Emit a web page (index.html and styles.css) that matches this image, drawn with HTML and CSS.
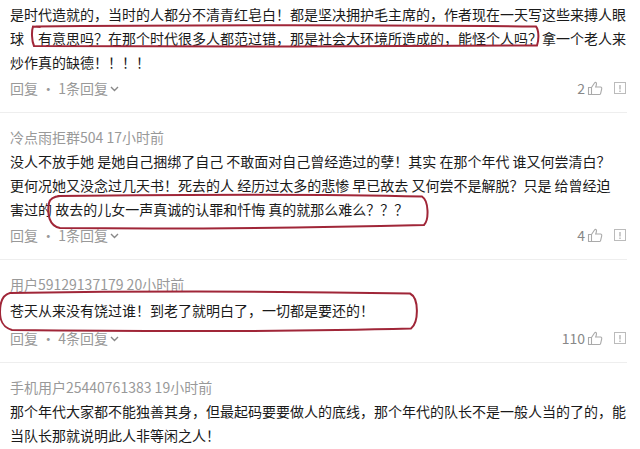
FILE: index.html
```html
<!DOCTYPE html>
<html>
<head>
  <meta charset="utf-8">
  <title>评论</title>
  <link rel="stylesheet" href="styles.css">
</head>
<body>
  <div class="page">
    <div class="comment first">
      <p class="comment-text">是时代造就的，当时的人都分不清青红皂白！都是坚决拥护毛主席的，作者现在一天写这些来搏人眼<br>球　有意思吗？在那个时代很多人都范过错，那是社会大环境所造成的，能怪个人吗？拿一个老人来<br>炒作真的缺德！！！！</p>
      <div class="actions">
        <span class="reply">回复 · 1条回复<svg class="chevron" width="9" height="6" viewBox="0 0 9 6"><path d="M1 1l3.5 3.5L8 1" fill="none" stroke="#888" stroke-width="1.4"/></svg></span>
        <span class="stats">
          <span class="count">2</span>
          <svg class="like" width="16" height="15" viewBox="0 0 16 15"><path d="M1.5 6.5h3v7h-3z M4.5 6.5L7.5 2Q8.5 0.8 9.3 1.8Q9.8 2.6 9.2 4.5L8.7 6H13.5Q15 6.2 14.7 7.8L13.6 12.6Q13.3 13.5 12.4 13.5H4.5" fill="none" stroke="#aaa" stroke-width="1.1"/></svg>
          <svg class="report" width="14" height="14" viewBox="0 0 14 14"><rect x="1.5" y="1.5" width="11" height="11" fill="none" stroke="#bbb"/><path d="M7 4v4.5M7 9.5v1.5" stroke="#aaa" stroke-width="1.2"/></svg>
        </span>
      </div>
    </div>

    <div class="comment">
      <div class="meta">冷点雨拒群504 17小时前</div>
      <p class="comment-text">没人不放手她 是她自己捆绑了自己 不敢面对自己曾经造过的孽！其实 在那个年代 谁又何尝清白？<br>更何况她又没念过几天书！死去的人 经历过太多的悲惨 早已故去 又何尝不是解脱？只是 给曾经迫<br>害过的 故去的儿女一声真诚的认罪和忏悔 真的就那么难么？？？</p>
      <div class="actions">
        <span class="reply">回复 · 1条回复<svg class="chevron" width="9" height="6" viewBox="0 0 9 6"><path d="M1 1l3.5 3.5L8 1" fill="none" stroke="#888" stroke-width="1.4"/></svg></span>
        <span class="stats">
          <span class="count">4</span>
          <svg class="like" width="16" height="15" viewBox="0 0 16 15"><path d="M1.5 6.5h3v7h-3z M4.5 6.5L7.5 2Q8.5 0.8 9.3 1.8Q9.8 2.6 9.2 4.5L8.7 6H13.5Q15 6.2 14.7 7.8L13.6 12.6Q13.3 13.5 12.4 13.5H4.5" fill="none" stroke="#aaa" stroke-width="1.1"/></svg>
          <svg class="report" width="14" height="14" viewBox="0 0 14 14"><rect x="1.5" y="1.5" width="11" height="11" fill="none" stroke="#bbb"/><path d="M7 4v4.5M7 9.5v1.5" stroke="#aaa" stroke-width="1.2"/></svg>
        </span>
      </div>
    </div>

    <div class="comment">
      <div class="meta">用户59129137179 20小时前</div>
      <p class="comment-text single">苍天从来没有饶过谁！到老了就明白了，一切都是要还的！</p>
      <div class="actions">
        <span class="reply">回复 · 4条回复<svg class="chevron" width="9" height="6" viewBox="0 0 9 6"><path d="M1 1l3.5 3.5L8 1" fill="none" stroke="#888" stroke-width="1.4"/></svg></span>
        <span class="stats">
          <span class="count">110</span>
          <svg class="like" width="16" height="15" viewBox="0 0 16 15"><path d="M1.5 6.5h3v7h-3z M4.5 6.5L7.5 2Q8.5 0.8 9.3 1.8Q9.8 2.6 9.2 4.5L8.7 6H13.5Q15 6.2 14.7 7.8L13.6 12.6Q13.3 13.5 12.4 13.5H4.5" fill="none" stroke="#aaa" stroke-width="1.1"/></svg>
          <svg class="report" width="14" height="14" viewBox="0 0 14 14"><rect x="1.5" y="1.5" width="11" height="11" fill="none" stroke="#bbb"/><path d="M7 4v4.5M7 9.5v1.5" stroke="#aaa" stroke-width="1.2"/></svg>
        </span>
      </div>
    </div>

    <div class="comment last">
      <div class="meta">手机用户25440761383 19小时前</div>
      <p class="comment-text">那个年代大家都不能独善其身，但最起码要要做人的底线，那个年代的队长不是一般人当的了的，能<br>当队长那就说明此人非等闲之人！</p>
    </div>

    <!-- hand-drawn red marks over the text -->
    <svg class="marks" width="640" height="449" viewBox="0 0 640 449">
      <path d="M36 26.5C150 25 380 24.5 536 26.5C539 30 539 40 537 45.5C400 47 160 46.5 34 46C31.5 40 31.5 31 33 26.5L40 27" />
      <path d="M58 196C180 194.5 330 194 422 196.5C429 201 429 220 424 225C320 227.5 160 229 60 228C49 226 47 214 49 203C50 198 54 196.5 60 196" />
      <path d="M10 293C140 291 300 291.5 410 293.5C419 298 419 322 411 328.5C300 331.5 140 331.5 12 330C2 327 0 320 0 312C0 302 2 295 10 293Z" />
    </svg>
  </div>
</body>
</html>
```

FILE: styles.css
```css
body {
  margin: 0;
  background-color: #fff;
  font-family: "Noto Sans CJK SC", "Noto Sans", sans-serif;
  font-size: 14px;
  color: #1a1a1a;
}

.page {
  position: relative;
  width: 640px;
  height: 449px;
  overflow: hidden;
}

.comment {
  padding: 12px 0 12px 10px;
  margin-right: 13px;
  border-bottom: 1px solid #eee;
}

.comment.first {
  padding-top: 2px;
}

.comment.last {
  border-bottom: none;
}

.meta {
  line-height: 24px;
  color: #999;
}

.comment-text {
  margin: 0;
  width: 620px;
  line-height: 24px;
  white-space: nowrap;
}

.comment-text.single {
  padding: 2px 0;
}

.actions {
  display: flex;
  justify-content: space-between;
  align-items: center;
  height: 24px;
  margin-top: 2px;
  color: #999;
}

.reply {
  display: flex;
  align-items: center;
}

.chevron {
  margin-left: 2px;
  margin-top: 2px;
}

.stats {
  display: flex;
  align-items: center;
}

.count {
  color: #888;
  margin-right: 2px;
}

.like {
  margin-right: 10px;
}

.marks {
  position: absolute;
  top: 0;
  left: 0;
  pointer-events: none;
}

.marks path {
  fill: none;
  stroke: #a02638;
  stroke-width: 2;
  stroke-linecap: round;
}
```
